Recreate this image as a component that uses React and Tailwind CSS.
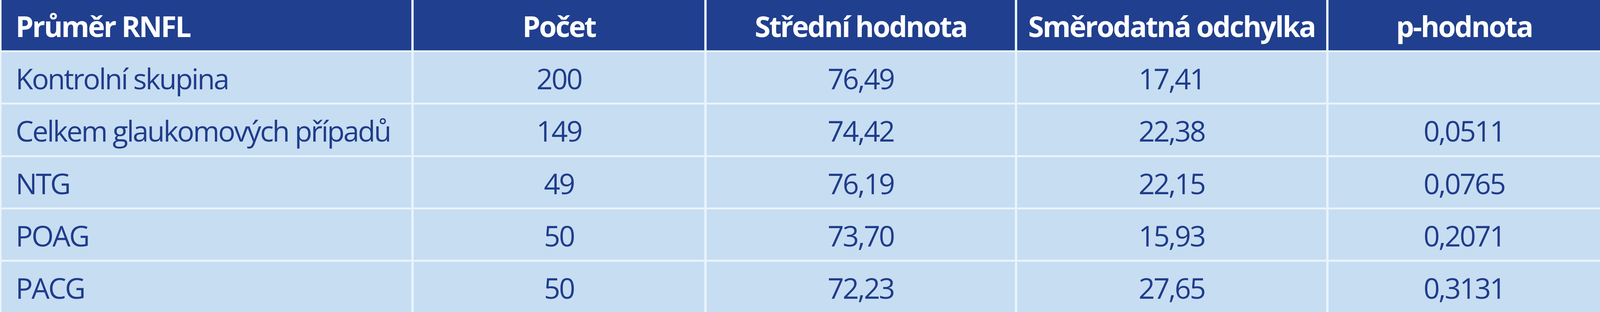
import React from 'react'

const headers = ['Průměr RNFL', 'Počet', 'Střední hodnota', 'Směrodatná odchylka', 'p-hodnota']

const rows = [
  ['Kontrolní skupina', '200', '76,49', '17,41', ''],
  ['Celkem glaukomových případů', '149', '74,42', '22,38', '0,0511'],
  ['NTG', '49', '76,19', '22,15', '0,0765'],
  ['POAG', '50', '73,70', '15,93', '0,2071'],
  ['PACG', '50', '72,23', '27,65', '0,3131'],
]

export default function App() {
  return (
    <div
      className="w-full h-[800px] bg-[#e8f4fc] pl-[4px] grid grid-cols-[1151fr_816fr_866fr_867fr_763fr] grid-rows-6 gap-x-[6px] gap-y-[5px] overflow-hidden"
      style={{ fontFamily: '"Open Sans", "Noto Sans", sans-serif' }}
    >
      {/* Header */}
      {headers.map((h, i) => (
        <div
          key={h}
          className={`min-w-0 whitespace-nowrap bg-[#203f8e] text-white font-bold text-[73px] tracking-[-0.045em] flex items-center ${
            i === 0 ? 'pl-[36px]' : 'justify-center'
          }`}
        >
          <span className="leading-none pt-[4px]">{h}</span>
        </div>
      ))}

      {/* Body */}
      {rows.map((row) =>
        row.map((cell, i) => (
          <div
            key={row[0] + i}
            className={`min-w-0 whitespace-nowrap bg-[#c7ddf2] text-[#1f3c8a] text-[73px] tracking-[-0.045em] flex items-center ${
              i === 0 ? 'pl-[36px]' : 'justify-center'
            }`}
          >
            <span className="leading-none pt-[4px]">{cell}</span>
          </div>
        ))
      )}
    </div>
  )
}
